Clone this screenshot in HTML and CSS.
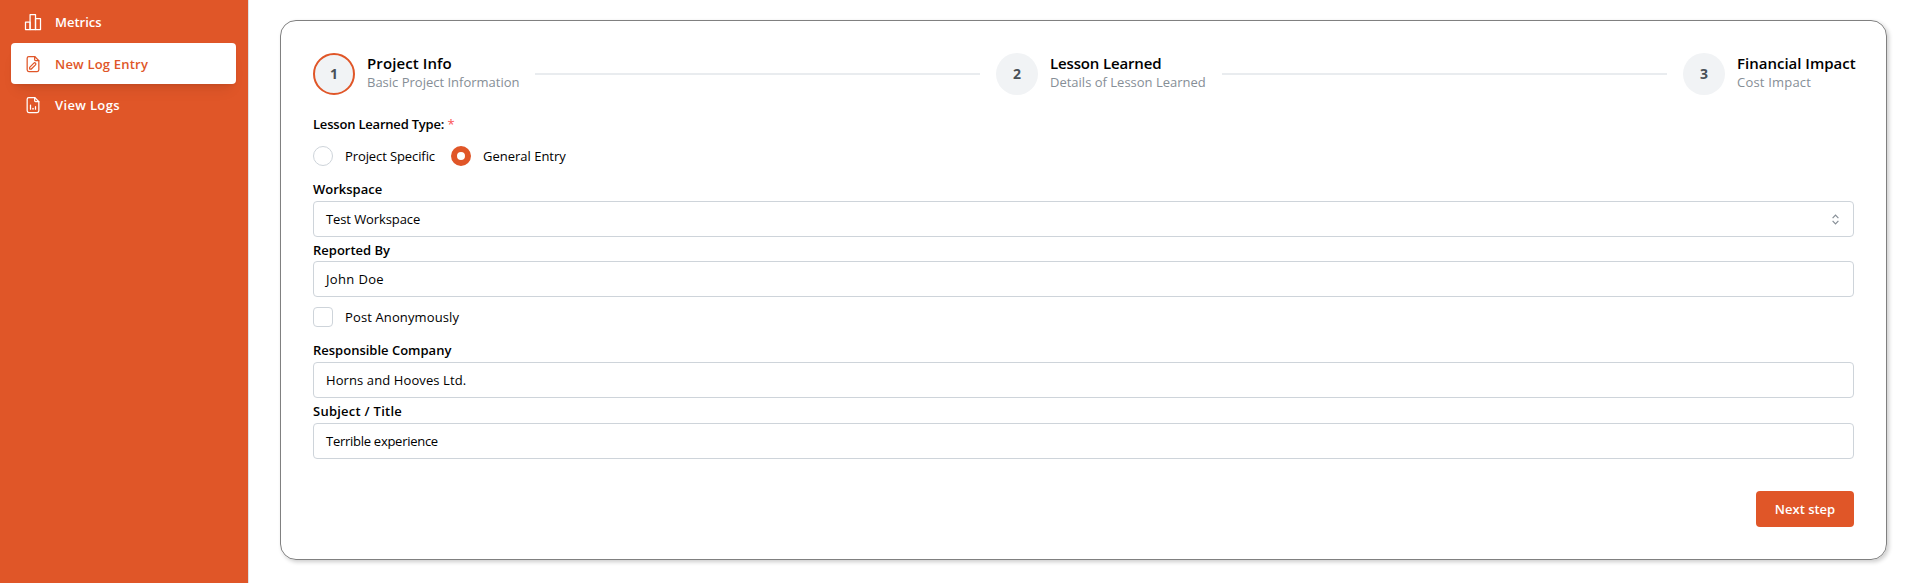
FILE: index.html
```html
<!DOCTYPE html>
<html lang="en">
<head>
    <meta charset="UTF-8">
    <title>New Log Entry</title>
    <link rel="stylesheet" href="styles.css">
</head>
<body>
<div class="layout">
    <nav class="sidebar">
        <a class="nav-item" href="#">
            <svg class="nav-icon" viewBox="0 0 24 24">
                <path d="M3 12h5.500v9h-5.500z"/>
                <path d="M8.500 3h6.500v18h-6.500z"/>
                <path d="M15 8h6v13h-6z"/>
            </svg>
            <span>Metrics</span>
        </a>
        <a class="nav-item active" href="#">
            <svg class="nav-icon" viewBox="0 0 24 24">
                <path d="M14 3v4a1 1 0 0 0 1 1h4"/>
                <path d="M17 21h-10a2 2 0 0 1 -2 -2v-14a2 2 0 0 1 2 -2h7l5 5v11a2 2 0 0 1 -2 2z"/>
                <path d="M10 18l5 -5a1.414 1.414 0 0 0 -2 -2l-5 5v2h2z"/>
            </svg>
            <span class="w-nav">New Log Entry</span>
        </a>
        <a class="nav-item" href="#">
            <svg class="nav-icon" viewBox="0 0 24 24">
                <path d="M14 3v4a1 1 0 0 0 1 1h4"/>
                <path d="M17 21h-10a2 2 0 0 1 -2 -2v-14a2 2 0 0 1 2 -2h7l5 5v11a2 2 0 0 1 -2 2z"/>
                <path d="M9 17v-5"/>
                <path d="M12 17v-1"/>
                <path d="M15 17v-3"/>
            </svg>
            <span class="w-logs">View Logs</span>
        </a>
    </nav>
    <main class="content">
        <div class="card">
            <div class="steps">
                <div class="step">
                    <span class="step-num current">1</span>
                    <div class="step-body first">
                        <p class="step-title w-info">Project Info</p>
                        <p class="step-desc">Basic Project Information</p>
                    </div>
                </div>
                <div class="line"></div>
                <div class="step">
                    <span class="step-num">2</span>
                    <div class="step-body second">
                        <p class="step-title w-lesson">Lesson Learned</p>
                        <p class="step-desc">Details of Lesson Learned</p>
                    </div>
                </div>
                <div class="line"></div>
                <div class="step">
                    <span class="step-num">3</span>
                    <div class="step-body third">
                        <p class="step-title">Financial Impact</p>
                        <p class="step-desc w-cost">Cost Impact</p>
                    </div>
                </div>
            </div>

            <div class="label type-label"><span class="w-type">Lesson Learned Type:</span> <span class="required">*</span></div>
            <div class="radios">
                <div class="option"><span class="radio"></span><span class="w-specific">Project Specific</span></div>
                <div class="option"><span class="radio checked"></span><span>General Entry</span></div>
            </div>

            <div class="label">Workspace</div>
            <div class="input">
                <span class="w-test">Test Workspace</span>
                <svg class="chevron" viewBox="0 0 15 15">
                    <path d="M4.600 6.100L7.500 3.200L10.400 6.100"/>
                    <path d="M4.600 8.900L7.500 11.800L10.400 8.900"/>
                </svg>
            </div>

            <div class="label next">Reported By</div>
            <div class="input"><span class="w-john">John Doe</span></div>

            <div class="option anonymous"><span class="checkbox"></span><span class="w-post">Post Anonymously</span></div>

            <div class="label">Responsible Company</div>
            <div class="input"><span class="w-horns">Horns and Hooves Ltd.</span></div>

            <div class="label subject">Subject / Title</div>
            <div class="input"><span class="w-terrible">Terrible experience</span></div>

            <div class="actions">
                <button class="btn">Next step</button>
            </div>
        </div>
    </main>
</div>
</body>
</html>
```
FILE: styles.css
```css
* {
    margin: 0;
    padding: 0;
    box-sizing: border-box;
}

body {
    font-family: "Open Sans", "Noto Sans", sans-serif;
    font-size: 13px;
    color: #000;
    background: #fff;
    overflow: hidden;
}

.layout {
    display: flex;
    height: 583px;
}

/* sidebar */
.sidebar {
    width: 249px;
    flex: none;
    padding: 1px 12px 0 11px;
    background: #e05628;
    border-right: 1px solid #dee2e6;
}

.nav-item {
    display: flex;
    align-items: center;
    height: 41px;
    padding-left: 12px;
    color: #fff;
    font-weight: 600;
    text-decoration: none;
    border-radius: 4px;
}

.nav-item.active {
    margin-top: 1px;
    color: #e05628;
    background: #fff;
    box-shadow: 0 1px 3px rgba(0, 0, 0, 0.05), 0 10px 15px -5px rgba(0, 0, 0, 0.07), 0 7px 7px -5px rgba(0, 0, 0, 0.05);
}

.nav-icon {
    width: 20px;
    height: 20px;
    margin-right: 12px;
    fill: none;
    stroke: currentColor;
    stroke-width: 1.5;
    stroke-linecap: round;
    stroke-linejoin: round;
}

/* card */
.content {
    flex: 1;
    padding: 20px 18px 23px 31px;
}

.card {
    height: 540px;
    padding: 32px;
    border: 1px solid #808080;
    border-radius: 16px;
    box-shadow: 2px 2px 4px rgba(0, 0, 0, 0.2);
}

/* stepper */
.steps {
    display: flex;
    align-items: center;
    height: 42px;
}

.step {
    display: flex;
    align-items: center;
}

.step-num {
    width: 42px;
    height: 42px;
    margin-right: 12px;
    line-height: 42px;
    text-align: center;
    font-size: 14px;
    font-weight: 700;
    color: #495057;
    background: #f1f3f5;
    border-radius: 50%;
}

.step-num.current {
    line-height: 38px;
    border: 2px solid #e05628;
}

.step-body {
    white-space: nowrap;
    padding-bottom: 3px;
}

.step-body.first {
    width: 152px;
}

.step-body.second {
    width: 156px;
}

.step-body.third {
    width: 117px;
}

.step-title {
    font-size: 15px;
    font-weight: 600;
    line-height: 20px;
}

.step-desc {
    line-height: 19px;
    color: #868e96;
}

.line {
    flex: 1;
    height: 2px;
    margin: 0 16px;
    background: #e9ecef;
}

/* form */
.label {
    height: 22px;
    line-height: 20px;
    font-weight: 600;
}

.label.next {
    margin-top: 2px;
    line-height: 22px;
}

.label.subject {
    margin-top: 3px;
}

.type-label {
    margin: 17px 0 12px;
    line-height: 24px;
}

.required {
    font-weight: 400;
    color: #fa5252;
}

.radios {
    display: flex;
    gap: 16px;
    margin-bottom: 13px;
}

.option {
    display: flex;
    align-items: center;
    height: 20px;
    line-height: 20px;
}

.radio,
.checkbox {
    width: 20px;
    height: 20px;
    margin-right: 12px;
    border: 1px solid #ced4da;
    border-radius: 4px;
}

.radio {
    border-radius: 50%;
}

.radio.checked {
    border: 6px solid #e05628;
}

.input {
    display: flex;
    align-items: center;
    justify-content: space-between;
    height: 36px;
    padding: 0 10px 0 12px;
    border: 1px solid #ced4da;
    border-radius: 4px;
}

.chevron {
    width: 15px;
    height: 15px;
    fill: none;
    stroke: #868e96;
    stroke-width: 1.2;
}

.anonymous {
    margin: 10px 0 13px;
}

.actions {
    display: flex;
    justify-content: flex-end;
    margin-top: 32px;
}

.btn {
    width: 98px;
    height: 36px;
    border: 0;
    border-radius: 4px;
    background: #e05628;
    color: #fff;
    font-family: inherit;
    font-size: 13px;
    font-weight: 600;
}

/* letter spacing */
.w-nav {
    letter-spacing: 0.2px;
}

.w-logs {
    letter-spacing: 0.35px;
}

.w-info {
    letter-spacing: 0.1px;
}

.w-lesson {
    letter-spacing: -0.15px;
}

.w-cost {
    letter-spacing: 0.2px;
}

.w-type {
    letter-spacing: -0.2px;
}

.w-specific {
    letter-spacing: -0.1px;
}

.w-test {
    letter-spacing: -0.1px;
}

.w-john {
    letter-spacing: 0.35px;
}

.w-post {
    letter-spacing: 0.12px;
}

.w-horns {
    letter-spacing: 0.1px;
}

.subject {
    letter-spacing: 0.25px;
}

.w-terrible {
    letter-spacing: -0.27px;
}
```
